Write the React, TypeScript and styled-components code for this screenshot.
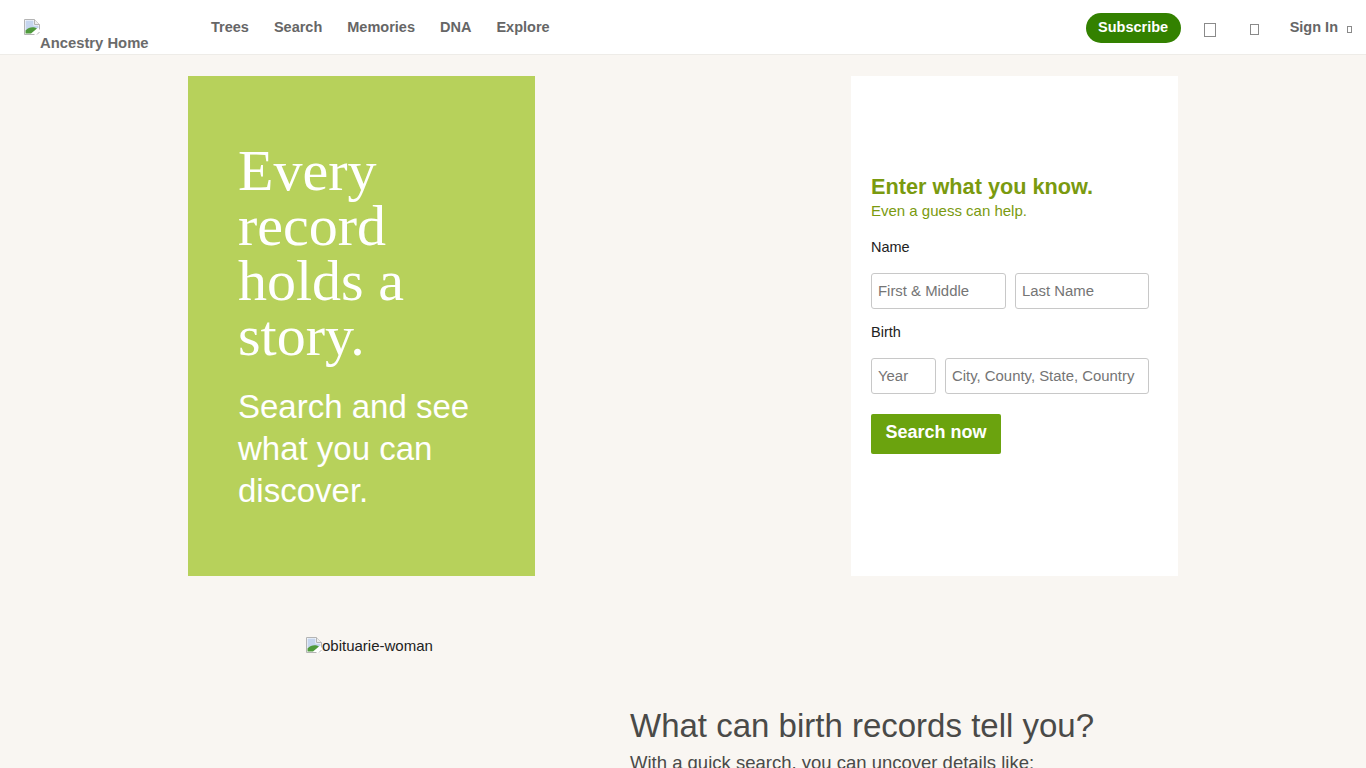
import React from 'react';
import styled, { createGlobalStyle } from 'styled-components';

const GlobalStyle = createGlobalStyle`
  html, body {
    margin: 0;
    padding: 0;
    height: 768px;
    overflow: hidden;
    background: #f9f6f2;
    font-family: "Liberation Sans", Arial, sans-serif;
  }
  * { box-sizing: border-box; }
`;

// broken image placeholder, as the browser draws it
const BrokenImage = () => (
  <BrokenIcon width="16" height="16" viewBox="0 0 16 16">
    <path d="M0.5 0.5H10.5L15.5 5.5V15.5H0.5Z" fill="#fff" stroke="#b4b4b4" />
    <path d="M10.5 0.5V5.5H15.5" fill="#eee" stroke="#b4b4b4" />
    <path d="M1.5 1.5H9.5V6.5H14.5V9L1.5 12Z" fill="#c5d5ee" />
    <path d="M1.5 14.5V11.5C5 7.5 10 7.5 13 9.5L7 14.5Z" fill="#4f9a3c" />
    <path d="M16 10L10 16H16Z" fill="#fff" />
    <path d="M13 15.5L15.5 13" stroke="#b4b4b4" />
  </BrokenIcon>
);

const App: React.FC = () => {
  return (
    <>
      <GlobalStyle />
      <Header>
        <LogoLink>
          <BrokenImage />
          <LogoAlt>Ancestry Home</LogoAlt>
        </LogoLink>
        <Nav>
          <NavLink>Trees</NavLink>
          <NavLink>Search</NavLink>
          <NavLink>Memories</NavLink>
          <NavLink>DNA</NavLink>
          <NavLink>Explore</NavLink>
        </Nav>
        <Actions>
          <Subscribe>Subscribe</Subscribe>
          <MissingGlyph $w={12} $h={14} $mr={34} />
          <MissingGlyph $w={9} $h={11} $mr={31} />
          <SignIn>Sign In</SignIn>
          <MissingGlyph $w={5} $h={7} />
        </Actions>
      </Header>

      <Hero>
        <PromoCard>
          <Headline>Every record holds a story.</Headline>
          <Subhead>Search and see what you can discover.</Subhead>
        </PromoCard>
        <FormCard>
          <FormTitle>Enter what you know.</FormTitle>
          <FormHint>Even a guess can help.</FormHint>
          <FieldLabel>Name</FieldLabel>
          <FieldRow>
            <TextField $w={135} placeholder="First & Middle" />
            <TextField $w={134} placeholder="Last Name" />
          </FieldRow>
          <FieldLabel>Birth</FieldLabel>
          <FieldRow>
            <TextField $w={65} placeholder="Year" />
            <TextField $w={204} placeholder="City, County, State, Country" />
          </FieldRow>
          <SearchButton>Search now</SearchButton>
        </FormCard>
      </Hero>

      <Details>
        <Portrait>
          <BrokenImage />
          obituarie-woman
        </Portrait>
        <DetailsText>
          <DetailsTitle>What can birth records tell you?</DetailsTitle>
          <DetailsLead>With a quick search, you can uncover details like:</DetailsLead>
        </DetailsText>
      </Details>
    </>
  );
};

const BrokenIcon = styled.svg`
  flex: none;
  vertical-align: top;
`;

const Header = styled.header`
  display: flex;
  align-items: flex-start;
  height: 55px;
  padding-left: 24px;
  background: #fff;
  border-bottom: 1px solid #eeece8;
`;

const LogoLink = styled.a`
  display: flex;
  width: 187px;
  padding-top: 19px;
`;

const LogoAlt = styled.span`
  margin-top: 16px;
  color: #6b6b6b;
  font-size: 14.8px;
  font-weight: 700;
  line-height: 16px;
`;

const Nav = styled.nav`
  display: flex;
  gap: 25px;
  padding-top: 19px;
`;

const NavLink = styled.a`
  color: #666;
  font-size: 14.5px;
  font-weight: 700;
  line-height: 16px;
`;

const Actions = styled.div`
  display: flex;
  align-items: center;
  margin-left: auto;
  padding: 13px 14px 0 0;
`;

const Subscribe = styled.a`
  display: flex;
  align-items: center;
  height: 30px;
  margin-right: 23px;
  padding: 0 12.5px 2px;
  border-radius: 15px;
  background: #338100;
  color: #fff;
  font-size: 14.5px;
  font-weight: 700;
`;

const MissingGlyph = styled.span<{ $w: number; $h: number; $mr?: number }>`
  display: block;
  width: ${({ $w }) => $w}px;
  height: ${({ $h }) => $h}px;
  margin-top: 3px;
  margin-right: ${({ $mr }) => $mr ?? 0}px;
  border: 1px solid #8a8a8a;
`;

const SignIn = styled.a`
  margin: 0 9px 2px 0;
  color: #666;
  font-size: 14.5px;
  font-weight: 700;
`;

const Hero = styled.section`
  display: flex;
  justify-content: space-between;
  width: 990px;
  height: 500px;
  margin: 21px 0 0 188px;
`;

const PromoCard = styled.div`
  width: 347px;
  padding: 67px 50px 0;
  background: #b7d15b;
  color: #fff;
`;

const Headline = styled.h1`
  margin: 0;
  font-family: "Liberation Serif", "Times New Roman", serif;
  font-size: 58px;
  font-weight: 400;
  line-height: 55px;
`;

const Subhead = styled.p`
  margin: 23px 0 0;
  font-size: 33px;
  line-height: 42px;
`;

const FormCard = styled.div`
  width: 327px;
  padding: 98px 20px 0;
  background: #fff;
`;

const FormTitle = styled.h2`
  margin: 0;
  color: #7a9a0f;
  font-size: 21.7px;
  font-weight: 700;
  line-height: 26px;
`;

const FormHint = styled.p`
  margin: 0;
  color: #7a9a0f;
  font-size: 15px;
  line-height: 22px;
`;

const FieldLabel = styled.div`
  margin-top: 17px;
  color: #222;
  font-size: 14.5px;
  line-height: 16px;
  & ~ & { margin-top: 15px; }
`;

const FieldRow = styled.div`
  display: flex;
  gap: 9px;
  margin-top: 18px;
`;

const TextField = styled.input<{ $w: number }>`
  width: ${({ $w }) => $w}px;
  height: 36px;
  padding: 0 6px 1px;
  border: 1px solid #c8c8c8;
  border-radius: 3px;
  background: #fff;
  font-family: inherit;
  font-size: 14.9px;
  &::placeholder { color: #757575; opacity: 1; }
`;

const SearchButton = styled.button`
  display: block;
  width: 130px;
  height: 40px;
  margin-top: 20px;
  padding: 0 0 3px;
  border: 0;
  border-radius: 2px;
  background: #6ba30e;
  color: #fff;
  font-family: inherit;
  font-size: 18px;
  font-weight: 700;
`;

const Details = styled.section`
  display: flex;
  margin: 61px 0 0 306px;
`;

const Portrait = styled.div`
  width: 324px;
  color: #222;
  font-size: 15px;
  line-height: 18px;
`;

const DetailsText = styled.div`
  padding-top: 69px;
`;

const DetailsTitle = styled.h2`
  margin: 0;
  color: #4a4a48;
  font-size: 33px;
  font-weight: 400;
  line-height: 40px;
`;

const DetailsLead = styled.p`
  margin: 5px 0 0;
  color: #4a4a48;
  font-size: 18.5px;
  line-height: 24px;
`;

export default App;
